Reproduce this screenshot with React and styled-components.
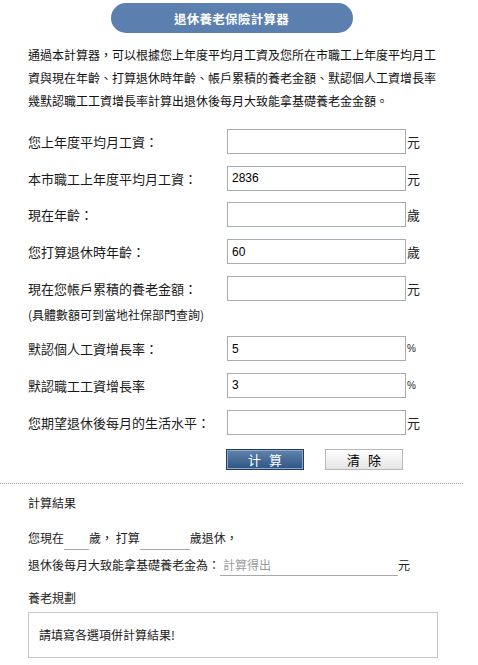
import React from 'react'
import styled, { createGlobalStyle } from 'styled-components'

const GlobalStyle = createGlobalStyle`
  html, body {
    margin: 0;
    padding: 0;
    background: #fff;
  }
  body {
    font-family: "Noto Sans CJK TC", "Liberation Sans", sans-serif;
    color: #222;
  }
`

const Page = styled.div`
  width: 463px;
  padding-top: 3px;
`

const Header = styled.div`
  width: 242px;
  height: 30px;
  margin: 0 auto;
  border-radius: 15px;
  background-color: #5b7fae;
  color: #fff;
  font-size: 12.5px;
  font-weight: 700;
  letter-spacing: 0.3px;
  display: flex;
  align-items: center;
  justify-content: center;
`

const Intro = styled.p`
  width: 410px;
  margin: 10px 0 0 28px;
  font-size: 12px;
  line-height: 23px;
  color: #111;
`

const Form = styled.div`
  margin: 17px 0 0 28px;
  display: flex;
  flex-direction: column;
  gap: 11.7px;
`

const Row = styled.div`
  display: grid;
  grid-template-columns: 199px 179px auto;
  align-items: center;
  height: 25px;
`

const Label = styled.span`
  font-size: 13px;
  color: #1a1a1a;
  white-space: nowrap;
`

const Field = styled.input`
  box-sizing: border-box;
  width: 179px;
  height: 25px;
  margin: 0;
  padding: 0 4px;
  border: 1px solid #a5acb2;
  font-family: "Liberation Sans", Arial, sans-serif;
  font-size: 12px;
  color: #000;
  outline: none;
`

const Unit = styled.span`
  padding-left: 1px;
  font-size: ${(p) => (p.$small ? '10px' : '13px')};
  font-family: ${(p) =>
    p.$small ? '"Liberation Sans", Arial, sans-serif' : '"Noto Sans CJK TC", sans-serif'};
  color: #222;
`

const Note = styled.div`
  font-size: 12px;
  line-height: 16px;
  margin: -5px 0 1px;
  color: #1a1a1a;
`

const Buttons = styled.div`
  display: flex;
  gap: 21px;
  margin: 14px 0 0 226px;
`

const Button = styled.button`
  box-sizing: border-box;
  width: 78px;
  height: 21px;
  margin: 0;
  padding: 0;
  font-family: "Noto Sans CJK SC", sans-serif;
  font-size: 13px;
  letter-spacing: 8px;
  text-indent: 8px;
  line-height: 17px;
  cursor: pointer;
  ${(p) =>
    p.$primary
      ? `
    color: #fff;
    border: 1px solid #1f3d5f;
    box-shadow: inset 0 0 0 1px #8fa9c6;
    background: linear-gradient(#6284ad, #2e5484);
  `
      : `
    color: #000;
    border: 1px solid #b8b8b8;
    background: linear-gradient(#ffffff, #e4e4e4);
  `}
`

const Divider = styled.div`
  margin-top: 13px;
  border-top: 1px dotted #9a9a9a;
`

const Result = styled.div`
  padding: 9px 0 0 28px;
  font-size: 12px;
  color: #222;
`

const Heading = styled.div`
  line-height: 20px;
  margin-top: ${(p) => p.$top || 0}px;
`

const Line = styled.div`
  display: flex;
  height: 24px;
  line-height: 24px;
  margin-top: ${(p) => p.$top || 0}px;
  white-space: pre;
`

const Blank = styled.span`
  box-sizing: border-box;
  display: inline-block;
  width: ${(p) => p.$w}px;
  height: ${(p) => p.$h || 24}px;
  border-bottom: 1px solid #a8a8a8;
  padding-left: 3px;
  color: #9a9a9a;
`

const Plan = styled.div`
  box-sizing: border-box;
  width: 410px;
  height: 46px;
  margin-top: 4px;
  padding: 0 10px;
  border: 1px solid #c8c8c8;
  display: flex;
  align-items: center;
  color: #222;
`

const fields = [
  { label: '您上年度平均月工資：', value: '', unit: '元' },
  { label: '本市職工上年度平均月工資：', value: '2836', unit: '元' },
  { label: '現在年齡：', value: '', unit: '歲' },
  { label: '您打算退休時年齡：', value: '60', unit: '歲' },
  { label: '現在您帳戶累積的養老金額：', value: '', unit: '元', note: '(具體數額可到當地社保部門查詢)' },
  { label: '默認個人工資增長率：', value: '5', unit: '%' },
  { label: '默認職工工資增長率', value: '3', unit: '%' },
  { label: '您期望退休後每月的生活水平：', value: '', unit: '元' },
]

export default function App() {
  return (
    <>
      <GlobalStyle />
      <Page>
        <Header>退休養老保險計算器</Header>
        <Intro>
          通過本計算器，可以根據您上年度平均月工資及您所在市職工上年度平均月工資與現在年齡、打算退休時年齡、帳戶累積的養老金額、默認個人工資增長率幾默認職工工資增長率計算出退休後每月大致能拿基礎養老金金額。
        </Intro>
        <Form>
          {fields.map((f) => (
            <React.Fragment key={f.label}>
              <Row>
                <Label>{f.label}</Label>
                <Field defaultValue={f.value} />
                <Unit $small={f.unit === '%'}>{f.unit}</Unit>
              </Row>
              {f.note && <Note>{f.note}</Note>}
            </React.Fragment>
          ))}
        </Form>
        <Buttons>
          <Button $primary>计算</Button>
          <Button>清除</Button>
        </Buttons>
        <Divider />
        <Result>
          <Heading>計算結果</Heading>
          <Line $top={13}>
            您現在<Blank $w={25} />歲， 打算<Blank $w={50} />歲退休，
          </Line>
          <Line $top={3}>
            退休後每月大致能拿基礎養老金為：<Blank $w={178} $h={23}>計算得出</Blank>元
          </Line>
          <Heading $top={11}>養老規劃</Heading>
          <Plan>請填寫各選項併計算結果!</Plan>
        </Result>
      </Page>
    </>
  )
}
